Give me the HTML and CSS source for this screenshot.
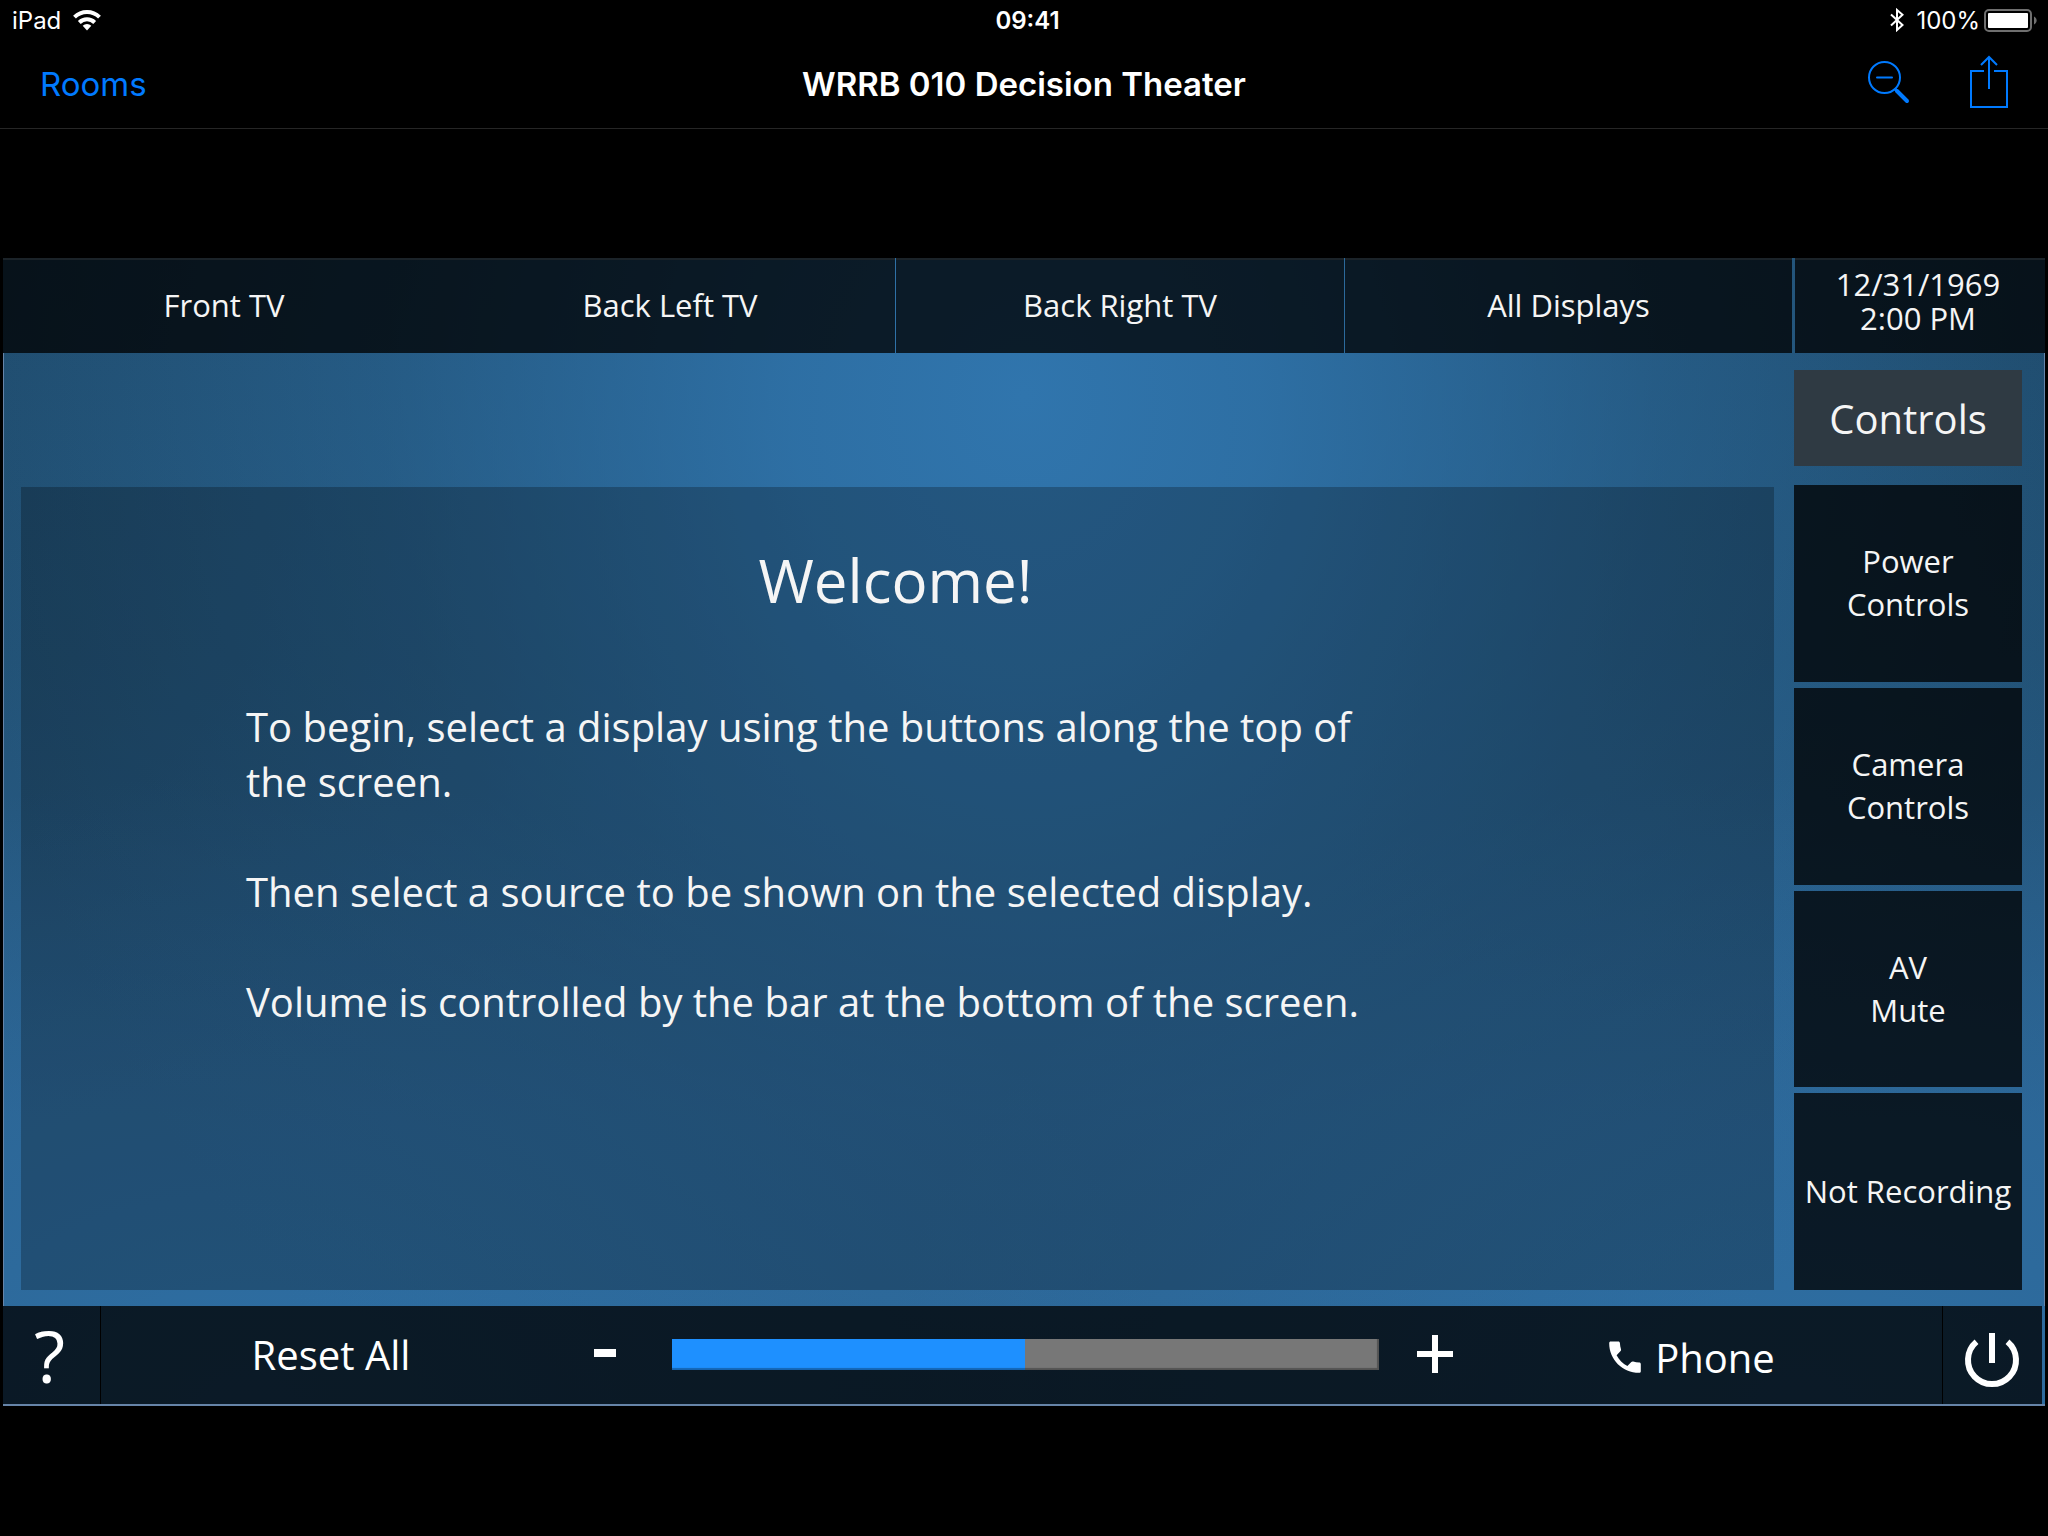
FILE: index.html
```html
<!DOCTYPE html>
<html lang="en">
<head>
<meta charset="utf-8">
<meta name="viewport" content="width=device-width, initial-scale=1">
<title>WRRB 010 Decision Theater</title>
<link rel="stylesheet" href="styles.css">
</head>
<body>
<header class="app-header">
  <div class="status-bar">
    <div class="status-group">
      <span>iPad</span>
      <svg class="icon-wifi" width="28" height="21" viewBox="0 0 28 21" aria-label="Wi-Fi">
        <g fill="none" stroke="#fff">
          <path d="M1.500 7.200a17.800 17.800 0 0 1 25 0" stroke-width="4"/>
          <path d="M6.300 12.500a11 11 0 0 1 15.400 0" stroke-width="4"/>
        </g>
        <path d="M9.700 15.700a6.200 6.200 0 0 1 8.600 0L14 20.500z" fill="#fff"/>
      </svg>
    </div>
    <time class="status-time">09:41</time>
    <div class="status-group status-end">
      <svg width="14" height="24" viewBox="0 0 14 24" aria-label="Bluetooth">
        <path d="M1 6.500l11.500 10.500L7 22V2l5.500 4.800L1 17.500" fill="none" stroke="#fff" stroke-width="2"/>
      </svg>
      <span class="battery-text">100%</span>
      <svg width="53" height="23" viewBox="0 0 53 23" aria-label="Battery">
        <rect x="1" y="1" width="46" height="21" rx="4" fill="none" stroke="#6f6f6f" stroke-width="2"/>
        <rect x="4" y="4" width="40" height="15" rx="1" fill="#fff"/>
        <path d="M50 7.500c3.500 1.500 3.500 6.500 0 8z" fill="#6f6f6f"/>
      </svg>
    </div>
  </div>
  <nav class="nav-bar">
    <a class="nav-back" href="#rooms">Rooms</a>
    <h1 class="nav-title">WRRB 010 Decision Theater</h1>
    <div class="nav-actions">
      <button class="icon-button" type="button" aria-label="Zoom out">
        <svg width="42" height="54" viewBox="0 0 42 54">
          <g fill="none" stroke="#007aff">
            <circle cx="16.500" cy="22.500" r="15.500" stroke-width="2"/>
            <path d="M9 22.500h15" stroke-width="2" stroke-linecap="round"/>
            <path d="M27 34l3 3" stroke-width="3"/>
            <path d="M29 36l10 10" stroke-width="4" stroke-linecap="round"/>
          </g>
        </svg>
      </button>
      <button class="icon-button" type="button" aria-label="Share">
        <svg width="38" height="54" viewBox="0 0 38 54">
          <path d="M14 16H1v36h36V16H24M19 34V2M11 10l8-8 8 8" fill="none" stroke="#007aff" stroke-width="2"/>
        </svg>
      </button>
    </div>
  </nav>
</header>

<main class="stage">
  <div class="panel">
    <div class="top-bar">
      <button class="tab" type="button">Front TV</button>
      <button class="tab" type="button">Back Left TV</button>
      <button class="tab tab-ruled" type="button">Back Right TV</button>
      <button class="tab tab-ruled" type="button">All Displays</button>
      <div class="clock"><span>12/31/1969</span><span>2:00 PM</span></div>
    </div>

    <div class="content">
      <section class="welcome">
        <h2 class="welcome-title">Welcome!</h2>
        <div class="welcome-text">
          <p>To begin, select a display using the buttons along the top of the screen.</p>
          <p>Then select a source to be shown on the selected display.</p>
          <p>Volume is controlled by the bar at the bottom of the screen.</p>
        </div>
      </section>
      <aside class="side">
        <h2 class="side-title">Controls</h2>
        <div class="side-list">
          <button class="side-button" type="button">Power<br>Controls</button>
          <button class="side-button" type="button">Camera<br>Controls</button>
          <button class="side-button" type="button">AV<br>Mute</button>
          <button class="side-button" type="button">Not Recording</button>
        </div>
      </aside>
    </div>

    <div class="bottom-bar">
      <button class="bar-button help" type="button" aria-label="Help">?</button>
      <button class="bar-button" type="button">Reset All</button>
      <button class="bar-button" type="button" aria-label="Volume down">
        <svg width="22" height="38" viewBox="0 0 22 38"><path d="M0 14h22v8H0z" fill="#fff"/></svg>
      </button>
      <div class="volume"><input class="volume-slider" type="range" min="0" max="100" value="50" aria-label="Volume"></div>
      <button class="bar-button" type="button" aria-label="Volume up">
        <svg width="36" height="38" viewBox="0 0 36 38"><path d="M15 0h6v16h15v6H21v16h-6V22H0v-6h15z" fill="#fff"/></svg>
      </button>
      <button class="bar-button phone" type="button">
        <svg width="32" height="32" viewBox="0 0 32 32">
          <path d="M1.700 0.500h7.600c1 0 1.500.6 1.600 1.500.1 2.200.5 4.200 1.100 6.200.2.700.1 1.300-.4 1.800l-4 4.200c2.500 4.800 6 8.300 10.800 10.800l3.900-4c.5-.5 1.200-.7 1.800-.5 2 .7 4 1 6.200 1.100.9 0 1.500.6 1.500 1.600v7c0 1-.7 1.600-1.700 1.600C13.500 31.800.2 18.500.2 2.200c0-1 .6-1.700 1.500-1.700z" fill="#fff"/>
        </svg>
        Phone
      </button>
      <button class="bar-button power" type="button" aria-label="Power">
        <svg width="56" height="56" viewBox="0 0 56 56">
          <path d="M28 1v30M12.500 9.800a24 24 0 1 0 31 0" fill="none" stroke="#fff" stroke-width="6"/>
        </svg>
      </button>
    </div>
  </div>
</main>
</body>
</html>
```
FILE: styles.css
```css
* {
  box-sizing: border-box;
}

body {
  margin: 0;
  min-height: 100vh;
  display: flex;
  flex-direction: column;
  background: #000;
  color: #f5f5f5;
  font-family: "Open Sans", "Noto Sans", sans-serif;
}

h1,
h2,
p {
  margin: 0;
  font-weight: 400;
}

button {
  margin: 0;
  padding: 0;
  border: 0;
  background: none;
  color: inherit;
  font: inherit;
  cursor: pointer;
}

svg {
  display: block;
  flex: none;
}

/* Device status and navigation */
.app-header {
  border-bottom: 1px solid #262626;
  font-family: Inter, "Liberation Sans", sans-serif;
}

.status-bar,
.nav-bar {
  display: grid;
  grid-template-columns: 1fr auto 1fr;
  align-items: center;
}

.status-bar {
  height: 40px;
  padding: 0 11px 0 12px;
  color: #fff;
  font-size: 24px;
}

.status-group {
  display: flex;
  align-items: center;
  gap: 12px;
}

.status-end {
  justify-content: flex-end;
}

.battery-text {
  margin-right: -8px;
}

.status-time {
  padding-left: 6px;
  font-weight: 600;
}

.nav-bar {
  height: 88px;
  padding: 0 40px;
  font-size: 33px;
}

.nav-back {
  color: #007aff;
  text-decoration: none;
}

.nav-title {
  color: #fff;
  font-size: 33px;
  font-weight: 600;
}

.nav-actions {
  display: flex;
  justify-content: flex-end;
  gap: 60px;
  padding-bottom: 4px;
}

/* Touch panel */
.stage {
  flex: 1;
  display: flex;
  padding: 129px 3px 130px;
}

.panel {
  flex: 1;
  display: flex;
  flex-direction: column;
  border-bottom: 2px solid #6684a8;
  background:
    radial-gradient(ellipse 52% 110% at 50% 12%, #3075ad 0%, rgba(48, 117, 173, 0.85) 22%, rgba(48, 117, 173, 0.35) 60%, rgba(48, 117, 173, 0) 100%),
    radial-gradient(ellipse 45% 55% at 12% 100%, rgba(47, 115, 170, 0.75), rgba(47, 115, 170, 0)),
    radial-gradient(ellipse 45% 55% at 88% 100%, rgba(47, 115, 170, 0.75), rgba(47, 115, 170, 0)),
    linear-gradient(#1f4b6c, #225276 35%, #2b618e 75%);
}

.top-bar {
  display: grid;
  grid-template-columns:
    minmax(0, 442fr) minmax(0, 450fr) minmax(0, 449fr)
    minmax(0, 448fr) minmax(0, 253fr);
  height: 95px;
  font-size: 31px;
}

.tab,
.clock {
  border-top: 2px solid #1b2329;
  background: rgba(0, 0, 0, 0.76);
}

.tab {
  padding-bottom: 3px;
}

.tab-ruled {
  margin-left: 1px;
}

.clock {
  display: flex;
  flex-direction: column;
  align-items: center;
  justify-content: center;
  margin-left: 3px;
  padding: 0 4px 11px 0;
  line-height: 34px;
}

.content {
  flex: 1;
  display: grid;
  grid-template-columns: minmax(0, 1fr) 228px;
  gap: 20px;
  padding: 17px 22px 16px 17px;
  border: solid #6684a8;
  border-width: 0 1px;
}

.welcome {
  margin-top: 117px;
  padding: 52px 229px 0 225px;
  background: rgba(0, 0, 0, 0.25);
}

.welcome-title {
  font-size: 60px;
  line-height: 82px;
  text-align: center;
}

.welcome-text {
  display: flex;
  flex-direction: column;
  gap: 55px;
  width: 1160px;
  max-width: 100%;
  margin-top: 78px;
  font-size: 40px;
  line-height: 55px;
}

.side {
  display: flex;
  flex-direction: column;
  gap: 19px;
}

.side-title {
  padding: 21px 0 20px;
  background: #2f3a43;
  font-size: 40px;
  line-height: 55px;
  text-align: center;
}

.side-list {
  flex: 1;
  display: flex;
  flex-direction: column;
  gap: 6px;
}

.side-button {
  flex: 1;
  background: rgba(0, 0, 0, 0.76);
  font-size: 31px;
  line-height: 43px;
}

.bottom-bar {
  display: grid;
  grid-template-columns:
    minmax(0, 98fr) minmax(0, 460fr) minmax(0, 88fr) minmax(0, 753fr)
    minmax(0, 66fr) minmax(0, 474fr) minmax(0, 100fr);
  height: 98px;
  margin-right: 3px;
  background: rgba(0, 0, 0, 0.76);
  color: #fff;
  font-size: 40px;
}

.bar-button {
  display: flex;
  align-items: center;
  justify-content: center;
  padding-bottom: 2px;
}

.help {
  border-right: 1px solid #000;
  padding: 0 4px 0 0;
  font-size: 72px;
  font-weight: 500;
  line-height: 98px;
}

.volume {
  display: flex;
  align-items: center;
  padding: 0 23px 2px;
}

.volume-slider {
  appearance: none;
  width: 100%;
  height: 31px;
  margin: 0;
  background: linear-gradient(90deg, #1e90ff 50%, #777 50%);
  box-shadow: inset -2px -2px 1px rgba(0, 0, 0, 0.3);
}

.volume-slider::-webkit-slider-thumb {
  appearance: none;
  width: 1px;
  height: 31px;
}

.phone {
  gap: 14px;
  padding: 4px 26px 0 0;
}

.power {
  border-left: 1px solid #000;
  padding: 10px 2px 0 0;
}
```
